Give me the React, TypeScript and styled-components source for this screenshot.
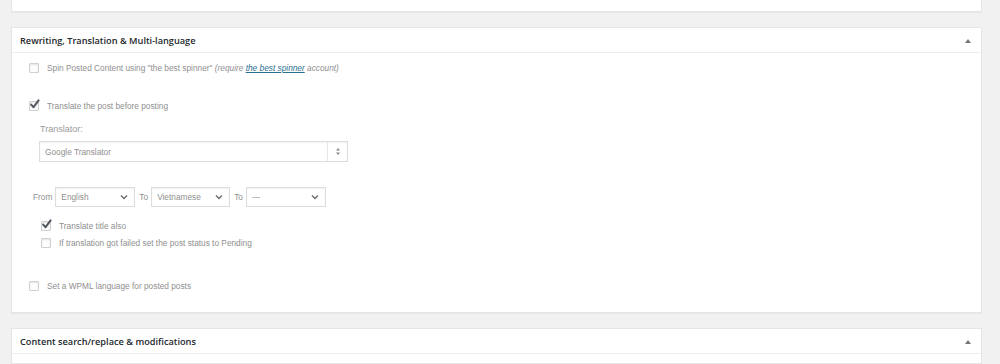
import React from 'react';
import styled, { createGlobalStyle } from 'styled-components';

const GlobalStyle = createGlobalStyle`
  html, body {
    margin: 0;
    padding: 0;
    background: #f1f1f1;
    width: 1000px;
    height: 364px;
    overflow: hidden;
  }
`;

const Page = styled.div`
  width: 971px;
  height: 364px;
  overflow: hidden;
  padding-left: 11px;
  display: flex;
  flex-direction: column;
  gap: 15px;
  font-family: 'Liberation Sans', Arial, sans-serif;
`;

const Panel = styled.section<{ $height?: number }>`
  background: #fff;
  border: 1px solid #e5e5e5;
  box-shadow: 0 1px 1px rgba(0, 0, 0, 0.04);
  box-sizing: border-box;
  flex: none;
  ${({ $height }) => ($height ? `height: ${$height}px;` : '')}
`;

const TopStub = styled(Panel)`
  border-top: none;
  height: 12px;
`;

const PanelHeader = styled.header`
  height: 25px;
  box-sizing: border-box;
  border-bottom: 1px solid #eeeeee;
  display: flex;
  align-items: center;
  justify-content: space-between;
  padding: 1px 9px 0 8px;
`;

const PanelTitle = styled.h2`
  margin: 0;
  font-family: 'Open Sans', 'Noto Sans', sans-serif;
  font-size: 9.2px;
  font-weight: 600;
  color: #23282d;
`;

const Toggle = styled.span`
  width: 0;
  height: 0;
  border-left: 3px solid transparent;
  border-right: 3px solid transparent;
  border-bottom: 4px solid #72777c;
  margin-right: 1px;
`;

const PanelBody = styled.div`
  padding: 8px 17px 20px 17px;
  display: flex;
  flex-direction: column;
  align-items: flex-start;
`;

const CheckRow = styled.label<{ $top?: number; $indent?: number }>`
  display: flex;
  align-items: center;
  gap: 8px;
  height: 14px;
  margin-top: ${({ $top }) => $top ?? 0}px;
  margin-left: ${({ $indent }) => $indent ?? 0}px;
  font-size: 8.3px;
  color: #8f8f8f;
  white-space: nowrap;
`;

const Box = styled.span`
  position: relative;
  width: 8px;
  height: 8px;
  border: 1px solid #d0d0d0;
  border-radius: 1px;
  background: #fdfdfd;
  box-shadow: inset 0 1px 2px rgba(0, 0, 0, 0.1);
  flex: none;
`;

const Tick = styled.svg`
  position: absolute;
  left: -1px;
  top: -4px;
`;

const Note = styled.em`
  font-style: italic;
`;

const Link = styled.a`
  color: #2a6f8f;
  text-decoration: underline;
`;

const Label = styled.div<{ $top?: number }>`
  margin: ${({ $top }) => $top ?? 0}px 0 0 11px;
  height: 12px;
  line-height: 12px;
  font-size: 9px;
  color: #9a9a9a;
`;

const SelectBox = styled.div<{ $width: number; $height: number }>`
  width: ${({ $width }) => $width}px;
  height: ${({ $height }) => $height}px;
  box-sizing: border-box;
  border: 1px solid #dddddd;
  box-shadow: inset 0 1px 2px rgba(0, 0, 0, 0.06);
  background: #fff;
  display: flex;
  align-items: center;
  font-size: 8.3px;
  color: #8f8f8f;
`;

const SelectText = styled.span`
  flex: 1;
  padding-left: 5px;
  white-space: nowrap;
`;

const SpinnerPart = styled.span`
  width: 19px;
  height: 100%;
  border-left: 1px solid #e6e6e6;
  display: flex;
  align-items: center;
  justify-content: center;
`;

const Chevron = styled.svg`
  margin-right: 6px;
`;

const TranslatorSelect = styled(SelectBox)`
  margin: 6px 0 0 10px;
`;

const LangRow = styled.div`
  display: flex;
  align-items: center;
  gap: 3px;
  margin: 25px 0 0 4px;
  font-size: 8.3px;
  color: #8f8f8f;
`;

const Joiner = styled.span`
  margin-left: 1px;
`;

const Checkbox = ({ checked }: { checked?: boolean }) => (
  <Box>
    {checked && (
      <Tick width="12" height="12" viewBox="0 0 12 12">
        <path d="M2.2 6.6 L4.6 9.2 L9.6 2.4" fill="none" stroke="#51575d" strokeWidth="2" strokeLinecap="round" strokeLinejoin="round" />
      </Tick>
    )}
  </Box>
);

const Dropdown = ({ value, width }: { value: string; width: number }) => (
  <SelectBox $width={width} $height={20}>
    <SelectText>{value}</SelectText>
    <Chevron width="8" height="6" viewBox="0 0 8 6">
      <path d="M1 1.5 L4 4.5 L7 1.5" fill="none" stroke="#6b6b6b" strokeWidth="1.4" />
    </Chevron>
  </SelectBox>
);

export default function App() {
  return (
    <>
      <GlobalStyle />
      <Page>
        <TopStub />
        <Panel $height={286}>
          <PanelHeader>
            <PanelTitle>Rewriting, Translation &amp; Multi-language</PanelTitle>
            <Toggle />
          </PanelHeader>
          <PanelBody>
            <CheckRow>
              <Checkbox />
              <span>
                Spin Posted Content using "the best spinner"{' '}
                <Note>
                  (require <Link>the best spinner</Link> account)
                </Note>
              </span>
            </CheckRow>
            <CheckRow $top={24}>
              <Checkbox checked />
              <span>Translate the post before posting</span>
            </CheckRow>
            <Label $top={10}>Translator:</Label>
            <TranslatorSelect $width={309} $height={21}>
              <SelectText>Google Translator</SelectText>
              <SpinnerPart>
                <svg width="6" height="9" viewBox="0 0 6 9">
                  <path d="M3 1 L5 3.4 H1 Z M3 8 L5 5.6 H1 Z" fill="#8a8a8a" />
                </svg>
              </SpinnerPart>
            </TranslatorSelect>
            <LangRow>
              <span>From</span>
              <Dropdown value="English" width={80} />
              <Joiner>To</Joiner>
              <Dropdown value="Vietnamese" width={79} />
              <Joiner>To</Joiner>
              <Dropdown value="---" width={80} />
            </LangRow>
            <CheckRow $top={12} $indent={12}>
              <Checkbox checked />
              <span>Translate title also</span>
            </CheckRow>
            <CheckRow $top={3} $indent={12}>
              <Checkbox />
              <span>If translation got failed set the post status to Pending</span>
            </CheckRow>
            <CheckRow $top={29}>
              <Checkbox />
              <span>Set a WPML language for posted posts</span>
            </CheckRow>
          </PanelBody>
        </Panel>
        <Panel $height={36}>
          <PanelHeader>
            <PanelTitle>Content search/replace &amp; modifications</PanelTitle>
            <Toggle />
          </PanelHeader>
        </Panel>
      </Page>
    </>
  );
}
